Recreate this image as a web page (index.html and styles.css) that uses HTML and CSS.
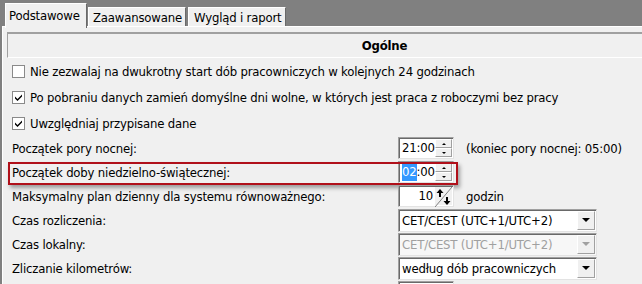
FILE: index.html
```html
<!DOCTYPE html>
<html lang="pl">
<head>
<meta charset="utf-8">
<title>Ustawienia</title>
<link rel="stylesheet" href="styles.css">
</head>
<body>
<div class="tabs">
  <div class="tab active">Podstawowe</div>
  <div class="tab t2">Zaawansowane</div>
  <div class="tab t3">Wygląd i raport</div>
</div>
<div class="panel">
  <div class="header">Ogólne</div>
  <div class="check-row"><span class="cb"></span><span>Nie zezwalaj na dwukrotny start dób pracowniczych w kolejnych 24 godzinach</span></div>
  <div class="check-row"><span class="cb"><svg viewBox="0 0 11 11" width="11" height="11"><path d="M2 4.5 L4.5 7 L9 2.5 L9 4.5 L4.5 9 L2 6.5 Z" fill="#000"/></svg></span><span>Po pobraniu danych zamień domyślne dni wolne, w których jest praca z roboczymi bez pracy</span></div>
  <div class="check-row"><span class="cb"><svg viewBox="0 0 11 11" width="11" height="11"><path d="M2 4.5 L4.5 7 L9 2.5 L9 4.5 L4.5 9 L2 6.5 Z" fill="#000"/></svg></span><span>Uwzględniaj przypisane dane</span></div>

  <div class="form-row">
    <span class="label">Początek pory nocnej:</span>
    <div class="spin">
      <span class="spin-val">21:00</span>
      <div class="spin-btns"><span class="sb"><i class="up"></i></span><span class="sb"><i class="down"></i></span></div>
    </div>
    <span class="note">(koniec pory nocnej: 05:00)</span>
  </div>

  <div class="form-row">
    <span class="label">Początek doby niedzielno-świątecznej:</span>
    <div class="spin">
      <span class="spin-val"><span class="sel">02</span>:00</span>
      <div class="spin-btns"><span class="sb"><i class="up"></i></span><span class="sb"><i class="down"></i></span></div>
    </div>
    <div class="highlight"></div>
  </div>

  <div class="form-row">
    <span class="label">Maksymalny plan dzienny dla systemu równoważnego:</span>
    <div class="spin">
      <span class="spin-val right">10</span>
      <span class="sb-diag"><svg viewBox="0 0 17 20" width="17" height="20"><path d="M0 20 L17 0" stroke="#808080" stroke-width="1"/><path d="M5 2 L1.5 6 L4 6 L4 10 L6 10 L6 6 L8.5 6 Z" fill="#000"/><path d="M12 18 L8.5 14 L11 14 L11 10 L13 10 L13 14 L15.5 14 Z" fill="#000"/></svg></span>
    </div>
    <span class="note">godzin</span>
  </div>

  <div class="form-row">
    <span class="label">Czas rozliczenia:</span>
    <div class="combo"><span class="combo-val">CET/CEST (UTC+1/UTC+2)</span><span class="combo-btn"><i class="tri"></i></span></div>
  </div>
  <div class="form-row">
    <span class="label">Czas lokalny:</span>
    <div class="combo disabled"><span class="combo-val">CET/CEST (UTC+1/UTC+2)</span><span class="combo-btn"><i class="tri"></i></span></div>
  </div>
  <div class="form-row">
    <span class="label">Zliczanie kilometrów:</span>
    <div class="combo"><span class="combo-val">według dób pracowniczych</span><span class="combo-btn"><i class="tri"></i></span></div>
  </div>
  <div class="form-row">
    <span class="label"></span>
    <div class="spin"><span class="spin-val"></span></div>
  </div>
</div>
</body>
</html>
```
FILE: styles.css
```css
* { box-sizing: border-box; }
html, body { margin: 0; padding: 0; }
body {
  background: #808080;
  width: 642px;
  height: 284px;
  overflow: hidden;
  font-family: "DejaVu Sans Condensed", "DejaVu Sans", sans-serif;
  font-size: 13px;
  letter-spacing: -0.18px;
  color: #000;
}
.tabs {
  display: flex;
  align-items: flex-end;
  height: 26px;
  padding-left: 5px;
  gap: 1px;
}
.tab {
  position: relative;
  z-index: 2;
  display: flex;
  align-items: center;
  height: 19px;
  width: 98px;
  padding-left: 4px;
  background: #f0f0f0;
  border-top: 1px solid #fff;
  border-left: 1px solid #fff;
  border-right: 1px solid #696969;
  white-space: nowrap;
}
.tab.active {
  width: 82px;
  height: 25px;
  margin-bottom: -2px;
  padding-left: 3px;
  padding-bottom: 1px;
}
.tab.t3 { margin-left: 1px; padding-left: 5px; }
.panel {
  position: relative;
  margin-left: 2px;
  width: 800px;
  height: 300px;
  background: #f0f0f0;
  border-top: 1px solid #fff;
  border-left: 1px solid #fff;
  padding: 5px 0 0 4px;
}
.header {
  height: 26px;
  width: 754px;
  border-top: 2px solid #a0a0a0;
  border-left: 1px solid #a0a0a0;
  border-bottom: 1px solid #fff;
  display: flex;
  align-items: center;
  justify-content: center;
  font-weight: bold;
}
.check-row {
  height: 26px;
  display: flex;
  align-items: center;
  padding-left: 5px;
  white-space: nowrap;
}
.cb {
  width: 13px;
  height: 13px;
  margin-right: 5px;
  background: #fff;
  border: 1px solid #8a8a8a;
  display: flex;
  align-items: center;
  justify-content: center;
  flex: none;
}
.cb svg { display: block; }
.form-row {
  position: relative;
  height: 24px;
  display: flex;
  align-items: center;
  padding-left: 5px;
  white-space: nowrap;
}
.label { width: 386px; flex: none; }
.note { margin-left: 12px; }
.spin {
  width: 56px;
  height: 22px;
  background: #fff;
  border: 1px solid;
  border-color: #a0a0a0 #e3e3e3 #e3e3e3 #a0a0a0;
  box-shadow: inset 1px 1px 0 #696969;
  display: flex;
  padding: 1px 1px 1px 3px;
  flex: none;
}
.spin-val {
  flex: 1;
  display: flex;
  align-items: center;
  line-height: 18px;
}
.spin-val.right { justify-content: flex-end; padding-right: 2px; }
.sel { background: #3399ff; color: #fff; }
.spin-btns {
  width: 17px;
  display: flex;
  flex-direction: column;
}
.sb {
  flex: 1;
  background: #f0f0f0;
  border: 1px solid;
  border-color: #fff #a0a0a0 #a0a0a0 #fff;
  display: flex;
  align-items: center;
  justify-content: center;
}
.sb i {
  width: 0;
  height: 0;
  border-left: 2px solid transparent;
  border-right: 2px solid transparent;
}
.sb i.up { border-bottom: 2px solid #000; }
.sb i.down { border-top: 2px solid #000; }
.sb-diag {
  width: 17px;
  background: #f0f0f0;
  display: flex;
}
.sb-diag svg { display: block; }
.highlight {
  position: absolute;
  left: 1px;
  top: 2px;
  width: 450px;
  height: 23px;
  border: 2px solid #b0101a;
  box-shadow: 2px 3px 4px rgba(0, 0, 0, 0.35);
  pointer-events: none;
}
.combo {
  width: 199px;
  height: 23px;
  background: #fff;
  border: 1px solid;
  border-color: #a0a0a0 #e3e3e3 #e3e3e3 #a0a0a0;
  box-shadow: inset 1px 1px 0 #696969;
  display: flex;
  padding: 1px 1px 1px 3px;
  flex: none;
}
.combo-val { flex: 1; display: flex; align-items: center; }
.combo-btn {
  width: 18px;
  background: #f0f0f0;
  border: 1px solid;
  border-color: #fff #a0a0a0 #a0a0a0 #fff;
  display: flex;
  align-items: center;
  justify-content: center;
}
.tri {
  width: 0;
  height: 0;
  border-left: 4px solid transparent;
  border-right: 4px solid transparent;
  border-top: 4px solid #000;
}
.combo.disabled { background: #f7f7f7; color: #a0a0a0; }
.combo.disabled .tri { border-top-color: #a0a0a0; }
```
